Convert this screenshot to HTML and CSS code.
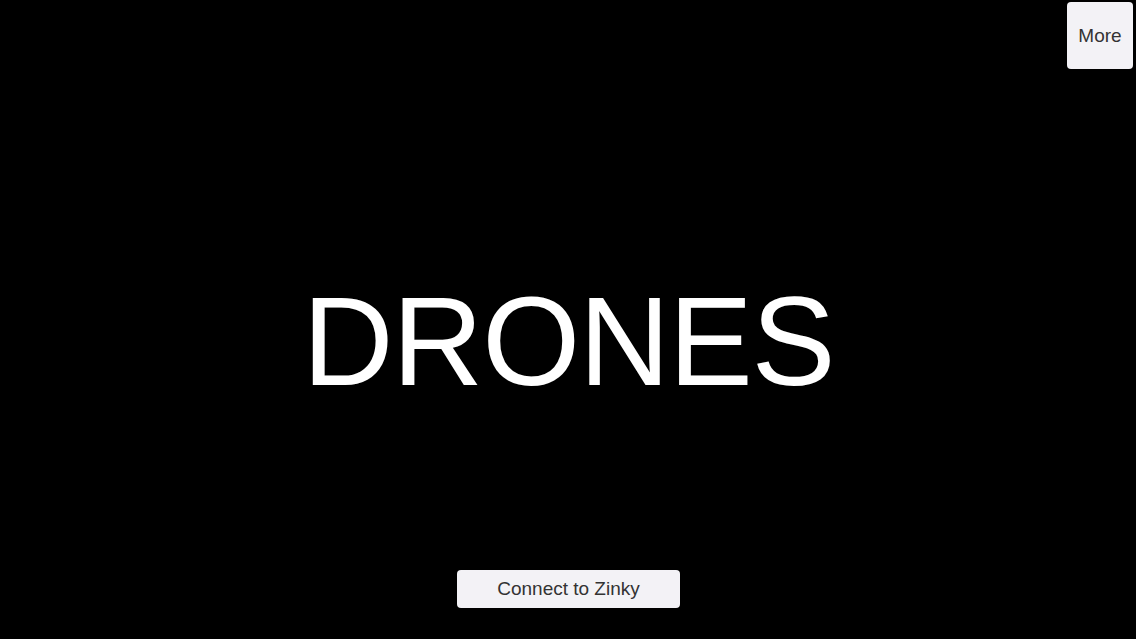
FILE: index.html
```html
<!DOCTYPE html>
<html lang="en">
<head>
<meta charset="utf-8">
<title>Drones</title>
<link rel="stylesheet" href="styles.css">
</head>
<body>
<div class="screen">
  <div class="topbar">
    <button class="more-btn">More</button>
  </div>
  <main class="main">
    <h1 class="title">DRONES</h1>
  </main>
  <div class="footer">
    <button class="connect-btn">Connect to Zinky</button>
  </div>
</div>
</body>
</html>
```
FILE: styles.css
```css
html, body {
  margin: 0;
  padding: 0;
  background: #000;
}
.screen {
  width: 1136px;
  height: 639px;
  display: flex;
  flex-direction: column;
  background: #000;
  font-family: "Liberation Sans", Arial, sans-serif;
  overflow: hidden;
}
.topbar {
  display: flex;
  justify-content: flex-end;
  padding: 2px 3px 0 0;
}
.more-btn {
  width: 66px;
  height: 67px;
  border: none;
  border-radius: 4px;
  background: #f3f2f6;
  color: #333;
  font-family: inherit;
  font-size: 19px;
  padding: 0;
}
.main {
  flex: 1;
  display: flex;
  align-items: center;
  justify-content: center;
  padding-top: 44px;
}
.title {
  margin: 0;
  color: #fff;
  font-size: 126px;
  font-weight: normal;
  line-height: 1;
  letter-spacing: -1.2px;
  padding-left: 1px;
}
.footer {
  display: flex;
  justify-content: center;
  padding-bottom: 31px;
}
.connect-btn {
  width: 223px;
  height: 38px;
  margin-left: 1px;
  border: none;
  border-radius: 4px;
  background: #f3f2f6;
  color: #333;
  font-family: inherit;
  font-size: 19px;
  padding: 0;
}
```
